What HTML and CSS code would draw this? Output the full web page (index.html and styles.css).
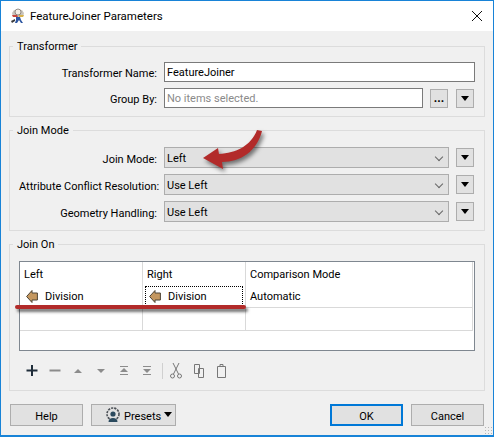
FILE: index.html
```html
<!DOCTYPE html>
<html lang="en">
  <head>
    <meta charset="utf-8">
    <title>FeatureJoiner Parameters</title>
    <link rel="stylesheet" href="styles.css">
  </head>
  <body>
    <div class="dialog">
      <header class="titlebar">
        <svg class="logo" width="18" height="18" viewBox="0 0 18 18">
          <path d="M5 3h8l2 3-1 4H4L3 6z" fill="#c9c4bc"/>
          <circle cx="9" cy="5" r="3" fill="#f4efe6" stroke="#6d6660" stroke-width=".7"/>
          <path d="M3 8h5l1 2H4z" fill="#c8463c"/>
          <path d="M10 8h5l-1 2h-4z" fill="#d9b24a"/>
          <path d="M7 10h4l1 3 2 3h-2l-2-3-2 3H6l1-3z" fill="#2c55a0"/>
          <path d="M2 14l4-2v2l-3 2z" fill="#3b3b3b"/>
        </svg>
        <span class="title">FeatureJoiner Parameters</span>
        <svg class="close" width="12" height="12" viewBox="0 0 12 12">
          <path d="M1 1l10 10M11 1L1 11" stroke="#111" fill="none"/>
        </svg>
      </header>

      <div class="content">
        <fieldset class="group">
          <legend>Transformer</legend>
          <div class="row">
            <label>Transformer Name:</label>
            <div class="input name-input">FeatureJoiner</div>
          </div>
          <div class="row">
            <label>Group By:</label>
            <div class="input group-input placeholder">No items selected.</div>
            <button class="small dots">...</button>
            <button class="small"><i class="tri"></i></button>
          </div>
        </fieldset>

        <fieldset class="group join-mode">
          <legend>Join Mode</legend>
          <div class="row tall">
            <label>Join Mode:</label>
            <div class="select">Left<i class="chev"></i></div>
            <button class="small"><i class="tri"></i></button>
          </div>
          <div class="row tall">
            <label>Attribute Conflict Resolution:</label>
            <div class="select">Use Left<i class="chev"></i></div>
            <button class="small"><i class="tri"></i></button>
          </div>
          <div class="row tall">
            <label>Geometry Handling:</label>
            <div class="select">Use Left<i class="chev"></i></div>
            <button class="small"><i class="tri"></i></button>
          </div>
        </fieldset>

        <fieldset class="group">
          <legend>Join On</legend>
          <div class="table-wrap">
            <table>
              <tr class="head">
                <td class="col-left">Left</td>
                <td class="col-right">Right</td>
                <td class="col-mode">Comparison Mode</td>
              </tr>
              <tr>
                <td><span class="attr"><svg class="port" width="12" height="15" viewBox="0 0 12 15"><path d="M.6 7.500L6 1.500V4h5.400v7H6v2.500z" fill="#c4975f" stroke="#4d4436"/></svg>Division</span></td>
                <td><span class="attr focus"><svg class="port" width="12" height="15" viewBox="0 0 12 15"><path d="M.6 7.500L6 1.500V4h5.400v7H6v2.500z" fill="#c4975f" stroke="#4d4436"/></svg>Division</span></td>
                <td>Automatic</td>
              </tr>
              <tr>
                <td></td>
                <td></td>
                <td></td>
              </tr>
            </table>
          </div>
          <div class="toolbar">
            <svg class="tool" width="16" height="16" viewBox="0 0 16 16"><path d="M8 2v11M2.500 7.500h11" stroke="#1f2d3a" stroke-width="2" fill="none"/></svg>
            <svg class="tool" width="16" height="16" viewBox="0 0 16 16"><path d="M2.500 7.500h11" stroke="#8c8c8c" stroke-width="2" fill="none"/></svg>
            <svg class="tool" width="16" height="16" viewBox="0 0 16 16"><path d="M4 10l4-4 4 4z" fill="#8c8c8c"/></svg>
            <svg class="tool" width="16" height="16" viewBox="0 0 16 16"><path d="M4 6h8l-4 4z" fill="#8c8c8c"/></svg>
            <svg class="tool" width="16" height="16" viewBox="0 0 16 16"><path d="M4 3.500h8M4 11.500h8" stroke="#8c8c8c" fill="none"/><path d="M4 9l4-4 4 4z" fill="#8c8c8c"/></svg>
            <svg class="tool" width="16" height="16" viewBox="0 0 16 16"><path d="M4 3.500h8M4 11.500h8" stroke="#8c8c8c" fill="none"/><path d="M4 6h8l-4 4z" fill="#8c8c8c"/></svg>
            <span class="sep"></span>
            <svg class="tool" width="16" height="18" viewBox="0 0 16 18"><path d="M5 1l5.500 11M11 1L5.500 12" stroke="#777" fill="none"/><circle cx="4.500" cy="14" r="2" fill="none" stroke="#777"/><circle cx="11.500" cy="14" r="2" fill="none" stroke="#777"/></svg>
            <svg class="tool" width="16" height="16" viewBox="0 0 16 16"><path d="M3.500 1.500h5v9h-5zM7.500 5.500h5v9h-5z" fill="#f0f0f0" stroke="#777"/></svg>
            <svg class="tool" width="16" height="16" viewBox="0 0 16 16"><path d="M3.500 3.500h8v11h-8zM6 3.500V1.500h3v2" fill="none" stroke="#777"/></svg>
          </div>
        </fieldset>

        <div class="footer">
          <button class="btn help">Help</button>
          <button class="btn presets">
            <svg width="16" height="16" viewBox="0 0 16 16">
              <circle cx="8" cy="7" r="6" fill="none" stroke="#4a4f55" stroke-width="1.600" stroke-dasharray="2.200 1"/>
              <circle cx="8" cy="7" r="2.600" fill="#2b4a5e"/>
              <path d="M3.500 15c0-3 2-4 4.500-4s4.500 1 4.500 4z" fill="#2b4a5e"/>
            </svg>
            <span>Presets</span><i class="tri"></i>
          </button>
          <button class="btn ok">OK</button>
          <button class="btn cancel">Cancel</button>
        </div>
      </div>

      <!-- annotations drawn on top of the screenshot -->
      <svg class="arrow" width="70" height="50" viewBox="0 0 70 50">
        <path d="M2 29L17 19l1 6c17-1 32-8 38-24l5 1c-5 20-21 31-40 31l1 7z" fill="#b22b2a"/>
      </svg>
      <div class="redline"></div>
      <div class="grip"></div>
    </div>
  </body>
</html>
```

FILE: styles.css
```css
body {
  margin: 0;
  font-family: Roboto, "Noto Sans", sans-serif;
  font-size: 11px;
  color: #000;
}

.dialog {
  position: relative;
  box-sizing: border-box;
  width: 494px;
  height: 437px;
  border: 1px solid #1883d7;
  border-bottom-width: 2px;
  background: #f0f0f0;
  overflow: hidden;
}

.titlebar {
  display: flex;
  align-items: center;
  height: 30px;
  padding: 0 10px 0 8px;
  background: #fff;
}

.logo {
  margin-right: 3px;
}

.title {
  flex: 1;
  font-size: 11.500px;
}

.content {
  padding: 7px 8px 0;
}

/* group boxes */
.group {
  margin: 0 0 5px;
  padding: 8px 9px 8px;
  border: 1px solid #dcdcdc;
  min-width: 0;
}

.group.join-mode {
  padding-top: 9px;
}

.group legend {
  margin-left: -6px;
  padding: 2px 4px 0;
  line-height: 14px;
}

.row {
  display: flex;
  align-items: center;
  height: 20px;
  margin-bottom: 6px;
}

.row:last-child {
  margin-bottom: 0;
}

.row.tall {
  height: 21px;
}

.row label {
  width: 138px;
  margin-right: 7px;
  padding-top: 3px;
  text-align: right;
  white-space: nowrap;
}

.input {
  box-sizing: border-box;
  height: 20px;
  padding-left: 2px;
  border: 1px solid #7a7a7a;
  background: #fff;
  line-height: 19px;
}

.name-input {
  width: 311px;
}

.group-input {
  width: 259px;
  margin-right: 7px;
}

.placeholder {
  color: #8a8a8a;
}

.select {
  position: relative;
  box-sizing: border-box;
  width: 285px;
  height: 21px;
  margin-right: 7px;
  padding-left: 2px;
  border: 1px solid #adadad;
  background: #e1e1e1;
  line-height: 21px;
}

.chev {
  position: absolute;
  top: 6px;
  right: 6px;
  width: 5px;
  height: 5px;
  border-right: 1px solid #666;
  border-bottom: 1px solid #666;
  transform: rotate(45deg);
}

.small {
  box-sizing: border-box;
  width: 18px;
  height: 19px;
  padding: 0;
  border: 1px solid #adadad;
  background: #e1e1e1;
  display: flex;
  align-items: center;
  justify-content: center;
}

.dots {
  margin-right: 8px;
  font-family: inherit;
  font-size: 12px;
  font-weight: bold;
  line-height: 20px;
}

.tri {
  display: inline-block;
  border-left: 4px solid transparent;
  border-right: 4px solid transparent;
  border-top: 5px solid #000;
}

/* join table */
.table-wrap {
  box-sizing: border-box;
  height: 90px;
  margin-top: 1px;
  border: 1px solid #7f8790;
  background: #fff;
}

table {
  border-collapse: separate;
  border-spacing: 0;
  table-layout: fixed;
  width: 453px;
}

td {
  height: 22px;
  padding: 0 0 0 4px;
  border-right: 1px solid #d9d9d9;
  border-bottom: 1px solid #d9d9d9;
  white-space: nowrap;
}

.head td {
  height: 21px;
  padding-top: 2px;
  border-bottom: 0;
}

.col-left {
  width: 118px;
}

.col-right {
  width: 98px;
}

.attr {
  display: flex;
  align-items: center;
  height: 20px;
}

.focus {
  margin-left: -2px;
  margin-right: 2px;
  padding-left: 2px;
  outline: 1px dotted #000;
  outline-offset: -1px;
}

.port {
  margin: 0 7px 0 2px;
}

/* toolbar under the table */
.toolbar {
  display: flex;
  align-items: center;
  height: 39px;
  margin-bottom: -8px;
  padding-left: 5px;
}

.tool {
  margin-right: 7px;
  flex: none;
}

.sep {
  width: 1px;
  height: 16px;
  margin: 0 5px 0 0;
  background: #d0d0d0;
}

/* bottom buttons */
.footer {
  display: flex;
  gap: 8px;
  margin: 13px 1px 0;
}

.btn {
  box-sizing: border-box;
  width: 73px;
  height: 22px;
  padding: 3px 0 0;
  border: 1px solid #adadad;
  background: #e1e1e1;
  font-family: inherit;
  font-size: 11px;
  color: #000;
}

.presets {
  display: flex;
  align-items: center;
  gap: 3px;
  width: 85px;
  padding: 0 0 0 13px;
}

.presets span {
  padding-top: 3px;
}

.presets .tri {
  margin-top: -2px;
}

.ok {
  margin-left: auto;
  border: 2px solid #0078d7;
}

/* red annotations */
.arrow {
  position: absolute;
  left: 200px;
  top: 128px;
  filter: drop-shadow(2px 3px 2px rgba(0, 0, 0, .5));
}

.redline {
  position: absolute;
  left: 14px;
  top: 304px;
  width: 231px;
  height: 4px;
  border-radius: 2px;
  background: #b22b2a;
  box-shadow: 2px 3px 3px rgba(0, 0, 0, .55);
}

.grip {
  position: absolute;
  right: 1px;
  bottom: 1px;
  width: 8px;
  height: 8px;
  background: radial-gradient(circle, #b5b5b5 1px, transparent 1px) 0 0 / 3px 3px;
}
```
